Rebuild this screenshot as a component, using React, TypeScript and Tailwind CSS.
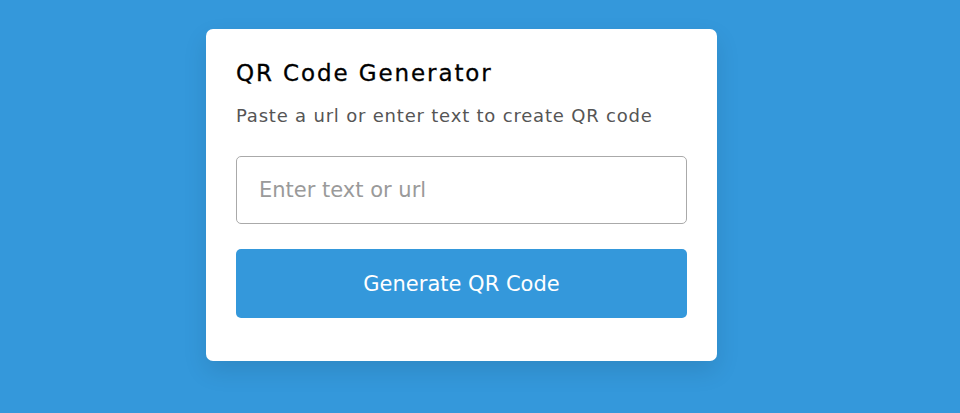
import React, { useState } from 'react';

const App: React.FC = () => {
  const [text, setText] = useState('');

  return (
    <div className="min-h-screen w-full bg-[#3498db] pl-[206px] pt-[29px] font-['DejaVu_Sans',sans-serif]">
      {/* Card */}
      <div className="w-[511px] rounded-[7px] bg-white px-[30px] pt-[28px] pb-[43px] shadow-[0_10px_25px_rgba(0,0,0,0.1)]">
        <h1 className="text-[23px] font-normal leading-[32px] tracking-[1.9px] text-black [-webkit-text-stroke:0.3px_#000]">
          QR Code Generator
        </h1>
        <p className="mt-[14px] text-[18px] leading-[26px] tracking-[0.8px] text-[#555]">
          Paste a url or enter text to create QR code
        </p>
        <input
          value={text}
          onChange={(e) => setText(e.target.value)}
          placeholder="Enter text or url"
          className="mt-[27px] block h-[68px] w-full rounded-[5px] border border-[#aaa] px-[22px] text-[21px] text-[#333] outline-none placeholder:text-[#9a9a9a]"
        />
        <button className="mt-[25px] block h-[69px] w-full rounded-[5px] bg-[#3498db] pt-[2px] text-[21px] text-white">
          Generate QR Code
        </button>
      </div>
    </div>
  );
};

export default App;
